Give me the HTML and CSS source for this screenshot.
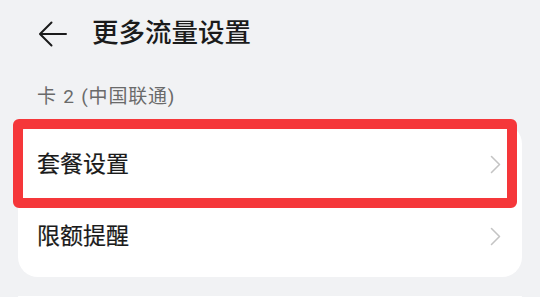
FILE: index.html
```html
<!DOCTYPE html>
<html lang="zh-CN">
<head>
  <meta charset="UTF-8">
  <meta name="viewport" content="width=device-width, initial-scale=1.0">
  <title>更多流量设置</title>
  <link rel="stylesheet" href="styles.css">
</head>
<body>
  <div class="topbar">
    <button class="back-btn" type="button" aria-label="返回">
      <svg width="29" height="26" viewBox="0 0 29 26">
        <path d="M28 13H2.5M13.5 1.5L2 13l11.5 11.5" fill="none" stroke="#1b1b1b" stroke-width="2" stroke-linecap="round" stroke-linejoin="round"/>
      </svg>
    </button>
    <h1>更多流量设置</h1>
  </div>

  <div class="section-label">卡 2 (中国联通)</div>

  <div class="card">
    <div class="row">
      <span class="row-title">套餐设置</span>
      <svg class="chevron" width="11" height="19" viewBox="0 0 11 19">
        <path d="M1.5 1.5l8 8-8 8" fill="none" stroke="#c4c4c4" stroke-width="1.6" stroke-linecap="round" stroke-linejoin="round"/>
      </svg>
      <div class="highlight"></div>
    </div>
    <div class="row">
      <span class="row-title">限额提醒</span>
      <svg class="chevron" width="11" height="19" viewBox="0 0 11 19">
        <path d="M1.5 1.5l8 8-8 8" fill="none" stroke="#c4c4c4" stroke-width="1.6" stroke-linecap="round" stroke-linejoin="round"/>
      </svg>
    </div>
  </div>

  <div class="card card-next"></div>
</body>
</html>
```
FILE: styles.css
```css
body {
  margin: 0;
  padding: 0;
  height: 297px;
  background-color: #f1f2f4;
  font-family: Roboto, "Noto Sans CJK SC", sans-serif;
  color: #1b1b1b;
  overflow: hidden;
}

.topbar {
  display: flex;
  align-items: center;
  height: 67px;
  padding-left: 38px;
}

.back-btn {
  display: flex;
  padding: 0;
  border: none;
  background: none;
  cursor: pointer;
}

.topbar h1 {
  margin: 0 0 0 25px;
  font-size: 26.5px;
  font-weight: 500;
  line-height: 1;
}

.section-label {
  padding-left: 37px;
  margin-top: 17px;
  font-size: 19px;
  line-height: 26px;
  letter-spacing: 0.8px;
  word-spacing: 1px;
  color: #6a6a6a;
}

.card {
  margin: 14px 18px 0;
  padding: 4px 0 5px;
  background: #fff;
  border-radius: 20px;
}

.card-next {
  margin-top: 19px;
  padding: 0;
  height: 1px;
}

.row {
  position: relative;
  display: flex;
  align-items: center;
  justify-content: space-between;
  height: 72px;
  padding: 0 21px 0 19px;
}

.row-title {
  font-size: 23px;
  line-height: 1;
  -webkit-text-stroke: 0.2px #1b1b1b;
}

.chevron {
  display: block;
}

.highlight {
  position: absolute;
  left: -5px;
  top: -9px;
  width: 504px;
  height: 89px;
  box-sizing: border-box;
  border: 10px solid #f5373a;
  border-radius: 6px;
}
```
